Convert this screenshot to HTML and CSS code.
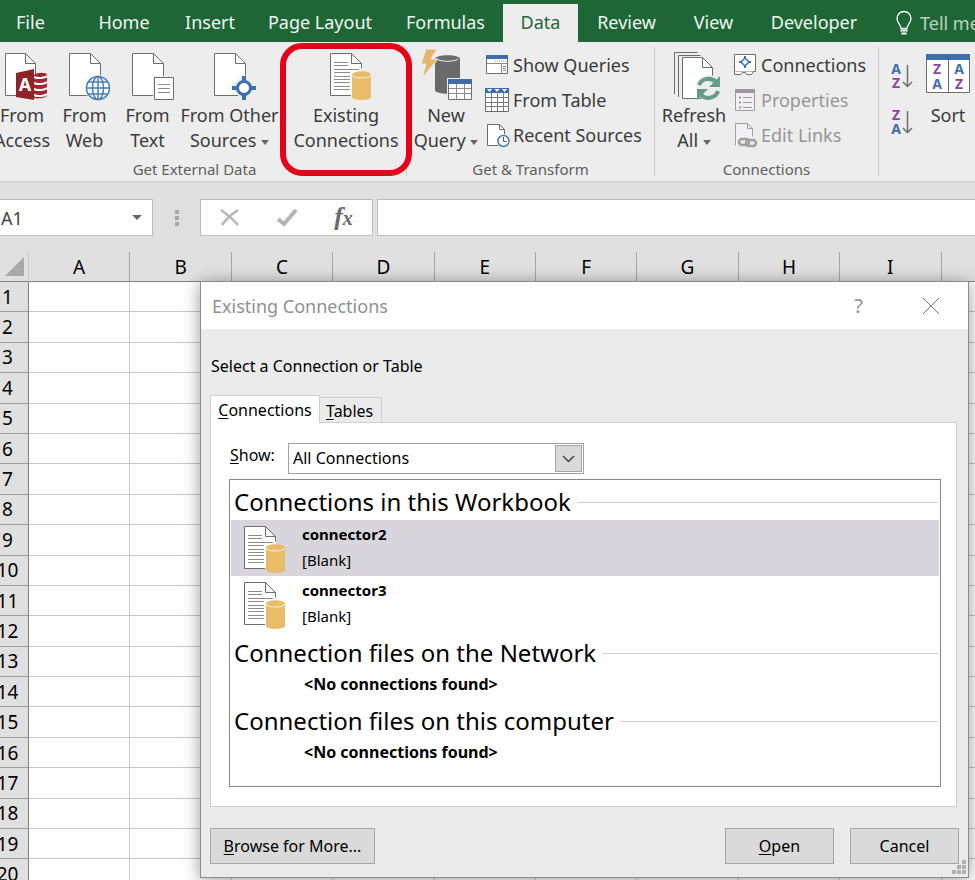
FILE: index.html
```html
<!DOCTYPE html>
<html lang="en">
<head>
    <meta charset="UTF-8">
    <meta name="viewport" content="width=device-width, initial-scale=1.0">
    <title>Existing Connections</title>
    <link rel="stylesheet" href="styles.css">
</head>
<body>

    <!-- shared icons -->
    <svg class="defs" width="0" height="0">
        <symbol id="page" viewBox="0 0 50 48">
            <path d="M9.5 1.5h21l10 10v32h-31z" fill="#fff" stroke="#6d6d6d"/>
            <path d="M30.5 1.5v10h10" fill="none" stroke="#6d6d6d"/>
        </symbol>
        <symbol id="page-db" viewBox="0 0 50 48">
            <path d="M9.5 43.5v-42h21l10 10v32z" fill="#fff"/>
            <path d="M30 43.5H9.5v-42h21l10 10v5M30.5 1.5v10h10" fill="none" stroke="#6d6d6d"/>
            <path d="M13 10.5h14M13 13.5h14M13 17.5h25M13 20.5h16M13 24.5h16M13 27.5h16M13 30.5h16M13 34.5h16M13 37.5h16" stroke="#8c8c8c"/>
            <path d="M31 23c0-5 19-5 19 0v22c0 4-19 4-19 0z" fill="#e8bd6a"/>
            <path d="M31 23c1 4 18 4 19 0" fill="none" stroke="#fbf0d8"/>
        </symbol>
    </svg>

    <nav class="tabs">
        <a href="#" class="file">File</a>
        <a href="#">Home</a>
        <a href="#">Insert</a>
        <a href="#">Page Layout</a>
        <a href="#">Formulas</a>
        <a href="#" class="active">Data</a>
        <a href="#">Review</a>
        <a href="#">View</a>
        <a href="#">Developer</a>
        <a href="#" class="tell">
            <svg width="16" height="24" viewBox="0 0 16 24" fill="none" stroke="#fff">
                <path d="M5 17.5c0-4-4-5-4-10a7 7 0 0 1 14 0c0 5-4 6-4 10z" stroke-width="1.3"/>
                <path d="M4.5 19.5h7M5.5 22.5h5" stroke-width="2"/>
            </svg>
            Tell me
        </a>
    </nav>

    <div class="ribbon">
        <section class="group external">
            <div class="items">
                <button class="big">
                    <svg width="50" height="48" viewBox="0 0 50 48">
                        <path d="M8.5 1.5h20l10 10v32h-30z" fill="#fff" stroke="#6d6d6d"/>
                        <path d="M28.5 1.5v10h10" fill="none" stroke="#6d6d6d"/>
                        <path d="M37 23c3-3 13-3 13 0v20c0 3-9 4-13 3z" fill="#a4262c"/>
                        <path d="M37 25c4 2 11 1 13-1M37 31c4 2 11 1 13-1M37 37c4 2 11 1 13-1M37 43c4 2 11 1 13-1" fill="none" stroke="#fff" stroke-width="2"/>
                        <path d="M19 21l18-4v31l-18-3z" fill="#8f2228"/>
                        <text x="28" y="39" class="glyph access">A</text>
                    </svg>
                    <span>From</span><span>Access</span>
                </button>
                <button class="big">
                    <svg width="50" height="48" viewBox="0 0 50 48">
                        <use href="#page"/>
                        <circle cx="38" cy="36" r="13" fill="#ededed"/>
                        <g fill="#fff" stroke="#4a7ebb" stroke-width="1.5">
                            <circle cx="38" cy="36" r="11.5"/>
                            <ellipse cx="38" cy="36" rx="5.5" ry="11.5"/>
                            <path d="M38 24.5v23M26.5 36h23M28.5 30h19M28.5 42h19" fill="none"/>
                        </g>
                    </svg>
                    <span>From</span><span>Web</span>
                </button>
                <button class="big">
                    <svg width="50" height="48" viewBox="0 0 50 48">
                        <use href="#page"/>
                        <path d="M30 24h22v24H30z" fill="#ededed"/>
                        <path d="M31.5 25.5h19v22h-19z" fill="#fff" stroke="#6d6d6d"/>
                        <path d="M35 32.5h12M35 36.5h12M35 40.5h12" stroke="#8c8c8c"/>
                    </svg>
                    <span>From</span><span>Text</span>
                </button>
                <button class="big">
                    <svg width="50" height="48" viewBox="0 0 50 48">
                        <use href="#page"/>
                        <path d="M39 22l14 14-14 13-14-13z" fill="#ededed"/>
                        <path d="M39 24v6M39 42v6M27 36h6M45 36h6" stroke="#3f6fb0" stroke-width="4"/>
                        <circle cx="39" cy="36" r="6.5" fill="#fff" stroke="#3f6fb0" stroke-width="3"/>
                    </svg>
                    <span>From Other</span><span>Sources <i class="caret"></i></span>
                </button>
                <button class="big highlighted">
                    <svg width="50" height="48"><use href="#page-db"/></svg>
                    <span>Existing</span><span>Connections</span>
                </button>
            </div>
            <h2>Get External Data</h2>
        </section>

        <section class="group transform">
            <div class="items">
                <button class="big">
                    <svg width="50" height="48" viewBox="0 0 50 48">
                        <path d="M14 7c0-5 25-5 25 0v31c0 5-25 5-25 0z" fill="#6a6a6a"/>
                        <path d="M16 7c3 3 18 3 21 0" fill="none" stroke="#ededed"/>
                        <path d="M5-3h11l-6 10h7L1 26l4-14H0z" fill="#e8b56a" stroke="#ededed"/>
                        <path d="M26 26h26v23H26z" fill="#ededed"/>
                        <path d="M27.5 28.5h23v19h-23z" fill="#fff" stroke="#6d6d6d"/>
                        <path d="M27 27h24v5H27z" fill="#3f6cac"/>
                        <path d="M28 36.5h22M28 41.5h22M35.5 32v15M43.5 32v15" stroke="#8c8c8c"/>
                    </svg>
                    <span>New</span><span>Query <i class="caret"></i></span>
                </button>
                <ul class="list">
                    <li><button>
                        <svg width="24" height="24" viewBox="0 0 24 24">
                            <path d="M1.5 3.5h21v17h-21z" fill="#fff" stroke="#6d6d6d"/>
                            <path d="M1 2h22v4H1z" fill="#3f6cac"/>
                            <path d="M2 10.5h20M16.5 11v9" stroke="#8c8c8c"/>
                            <path d="M10 8h11" stroke="#8c8c8c" stroke-dasharray="1 1"/>
                            <path d="M18 13.5h3M18 15.5h3M18 17.5h3" stroke="#8c8c8c"/>
                        </svg>Show Queries</button></li>
                    <li><button>
                        <svg width="24" height="26" viewBox="0 0 24 26">
                            <path d="M.5 2.5h23v22H.5z" fill="#fff" stroke="#6d6d6d"/>
                            <path d="M0 1h24v5H0z" fill="#3f6cac"/>
                            <path d="M2 2h5l-2.5 3zM9.500 2h5L12 5zM17 2h5l-2.500 3z" fill="#fff"/>
                            <path d="M0 10.5h24M0 15.5h24M0 19.5h24M6.5 6v18M12.5 6v18M18.5 6v18" stroke="#7c7c7c"/>
                        </svg>From Table</button></li>
                    <li><button>
                        <svg width="24" height="26" viewBox="0 0 24 26">
                            <path d="M2.5 23.5v-21h12l5 5v16z" fill="#fff" stroke="#6d6d6d"/>
                            <path d="M14.5 2.5v5h5" fill="none" stroke="#6d6d6d"/>
                            <circle cx="18.5" cy="19" r="7" fill="#ededed"/>
                            <circle cx="18.5" cy="19" r="5.5" fill="#fff" stroke="#4a7ebb" stroke-width="1.5"/>
                            <path d="M18.5 15v4.5h3" fill="none" stroke="#555"/>
                        </svg>Recent Sources</button></li>
                </ul>
            </div>
            <h2>Get &amp; Transform</h2>
        </section>

        <section class="group conns">
            <div class="items">
                <button class="big">
                    <svg width="50" height="48" viewBox="0 0 50 48" fill="none" stroke="#6d6d6d">
                        <path d="M5.5 42V.5h23M9.5 45V3.5h22"/>
                        <path d="M13.5 46.5v-41h20l10 10v31z" fill="#fff"/>
                        <path d="M33.5 5.5v10h10"/>
                        <circle cx="40" cy="36" r="13" fill="#ededed" stroke="none"/>
                        <path d="M30 33a10 9 0 0 1 17-3M49 39a10 9 0 0 1-17 4" stroke="#669c85" stroke-width="4"/>
                        <path d="M51 24v11H40zM28 48V37h11z" fill="#669c85" stroke="none"/>
                    </svg>
                    <span>Refresh</span><span>All <i class="caret"></i></span>
                </button>
                <ul class="list">
                    <li><button>
                        <svg width="24" height="24" viewBox="0 0 24 24">
                            <path d="M1.5 1.5h21v17h-21z" fill="#fff" stroke="#6d6d6d"/>
                            <path d="M12 3v3M12 12v3M6 9h3M15 9h3" stroke="#3f6fb0" stroke-width="2"/>
                            <path d="M12 5l4 4-4 4-4-4z" fill="#fff" stroke="#3f6fb0" stroke-width="1.5"/>
                            <path d="M1.5 18.5v3h6l2-2h3l1 2h5l2-3" fill="#fff" stroke="#6d6d6d"/>
                        </svg>Connections</button></li>
                    <li><button disabled>
                        <svg width="24" height="24" viewBox="0 0 24 24">
                            <path d="M2.5 1.5h19v21h-19z" fill="#f5eef5" stroke="#9c9c9c"/>
                            <path d="M2 1h20v4H2z" fill="#9c9c9c"/>
                            <path d="M10 9.500h9M10 14.500h9M10 19.500h9" stroke="#9c9c9c"/>
                            <path d="M6 9.500h2M6 14.500h2M6 19.500h2" stroke="#9c9c9c" stroke-width="2"/>
                        </svg>Properties</button></li>
                    <li><button disabled>
                        <svg width="24" height="26" viewBox="0 0 24 26" fill="none" stroke="#a0a0a0">
                            <path d="M2.5 23.5v-22h12l5 5v17z" fill="#f5eef5" stroke="none"/>
                            <path d="M2.5 23.5v-22h12l5 5v8M14.5 1.5v5h5"/>
                            <path d="M4 16h20v9H4z" fill="#ededed" stroke="none"/>
                            <rect x="6" y="17" width="10" height="6" rx="3" stroke-width="2.5"/>
                            <rect x="13" y="18" width="10" height="6" rx="3" stroke-width="2.5"/>
                        </svg>Edit Links</button></li>
                </ul>
            </div>
            <h2>Connections</h2>
        </section>

        <section class="group sorting">
            <div class="items">
                <div class="orders">
                    <button aria-label="Sort A to Z">
                        <svg width="24" height="26" viewBox="0 0 24 26">
                            <text x="6" y="11" class="glyph blue">A</text>
                            <text x="6" y="25" class="glyph purple">Z</text>
                            <path d="M17.5 2v21M13 19l4.5 4.5L22 19" fill="none" stroke="#6d6d6d" stroke-width="1.5"/>
                        </svg>
                    </button>
                    <button aria-label="Sort Z to A">
                        <svg width="24" height="26" viewBox="0 0 24 26">
                            <text x="6" y="11" class="glyph purple">Z</text>
                            <text x="6" y="25" class="glyph blue">A</text>
                            <path d="M17.5 2v21M13 19l4.5 4.5L22 19" fill="none" stroke="#6d6d6d" stroke-width="1.5"/>
                        </svg>
                    </button>
                </div>
                <button class="big">
                    <svg width="50" height="48" viewBox="0 0 50 48">
                        <path d="M3.5 3.5h43v37h-43z" fill="#fff" stroke="#6d6d6d"/>
                        <path d="M3 2h44v6H3z" fill="#3f6cac"/>
                        <path d="M25.5 8v32" stroke="#6d6d6d"/>
                        <text x="14" y="22" class="glyph purple">Z</text>
                        <text x="14" y="37" class="glyph blue">A</text>
                        <text x="36" y="22" class="glyph blue">A</text>
                        <text x="36" y="37" class="glyph purple">Z</text>
                    </svg>
                    <span>Sort</span>
                </button>
            </div>
        </section>
    </div>

    <div class="formula-bar">
        <div class="name-box">
            <input type="text" value="A1" aria-label="Name box">
            <i class="caret"></i>
        </div>
        <div class="dots"><i></i><i></i><i></i></div>
        <div class="entry">
            <button aria-label="Cancel entry">
                <svg width="20" height="20" viewBox="0 0 20 20" fill="none" stroke="#b5b5b5" stroke-width="2.5"><path d="M1 2c6 4 11 8 17 15M18 2C12 6 6 11 2 17"/></svg>
            </button>
            <button aria-label="Enter">
                <svg width="22" height="20" viewBox="0 0 22 20" fill="none" stroke="#b5b5b5" stroke-width="4"><path d="M2 11l6 5L20 2"/></svg>
            </button>
            <button class="fx">f<small>x</small></button>
        </div>
        <input type="text" class="formula" aria-label="Formula">
    </div>

    <main class="sheet">
        <table>
            <thead>
                <tr id="columns">
                    <td class="corner"><svg width="19" height="19" viewBox="0 0 19 19"><path d="M19 0v19H0z" fill="#a9a9a9"/></svg></td>
                </tr>
            </thead>
            <tbody id="rows"></tbody>
        </table>

        <div class="dialog" role="dialog" aria-labelledby="dialogTitle">
            <header>
                <h1 id="dialogTitle">Existing Connections</h1>
                <button>?</button>
                <button aria-label="Close">
                    <svg width="16" height="16" viewBox="0 0 16 16" stroke="#777"><path d="M0 0l16 16M16 0L0 16"/></svg>
                </button>
            </header>

            <p>Select a Connection or Table</p>

            <div class="dialog-tabs">
                <button class="current"><u>C</u>onnections</button>
                <button><u>T</u>ables</button>
            </div>
            <div class="panel">
                <div class="show">
                    <label for="show"><u>S</u>how:</label>
                    <div class="select">
                        <select id="show">
                            <option>All Connections</option>
                        </select>
                        <span class="arrow">
                            <svg width="13" height="8" viewBox="0 0 13 8" fill="none" stroke="#444" stroke-width="1.5"><path d="M1 1l5.5 5.5L12 1"/></svg>
                        </span>
                    </div>
                </div>

                <div class="listbox">
                    <h3>Connections in this Workbook</h3>
                    <div class="connection selected">
                        <svg width="50" height="48"><use href="#page-db"/></svg>
                        <div><b>connector2</b><span>[Blank]</span></div>
                    </div>
                    <div class="connection">
                        <svg width="50" height="48"><use href="#page-db"/></svg>
                        <div><b>connector3</b><span>[Blank]</span></div>
                    </div>
                    <h3>Connection files on the Network</h3>
                    <p class="empty">&lt;No connections found&gt;</p>
                    <h3>Connection files on this computer</h3>
                    <p class="empty">&lt;No connections found&gt;</p>
                </div>
            </div>

            <footer>
                <button class="browse"><u>B</u>rowse for More...</button>
                <button><u>O</u>pen</button>
                <button>Cancel</button>
            </footer>
            <svg class="grip" width="14" height="14" viewBox="0 0 14 14" fill="#b0b0b0"><path d="M10 0h4v4h-4zM5 5h4v4H5zM10 5h4v4h-4zM0 10h4v4H0zM5 10h4v4H5zM10 10h4v4h-4z"/></svg>
        </div>
    </main>

    <script>
        const columns = 'ABCDEFGHIJ'.split('');

        columns.forEach(function (name) {
            const th = document.createElement('th');
            th.textContent = name === 'J' ? '' : name;
            document.getElementById('columns').appendChild(th);
        });

        for (let i = 1; i <= 20; i++) {
            const row = document.getElementById('rows').insertRow();
            row.innerHTML = '<th>' + i + '</th>' + '<td></td>'.repeat(columns.length);
        }
    </script>

</body>
</html>
```
FILE: styles.css
```css
* {
    box-sizing: border-box;
}
body {
    font-family: "Noto Sans", "Open Sans", sans-serif;
    font-size: 18px;
    display: flex;
    flex-direction: column;
    height: 100vh;
    margin: 0;
    overflow: hidden;
    background-color: #e0e0e0;
    color: #000;
}
button, input, select {
    font: inherit;
    color: inherit;
    margin: 0;
    padding: 0;
    border: none;
    background: none;
}
h1, h2, h3, p, ul {
    margin: 0;
    padding: 0;
    font-weight: normal;
    list-style: none;
}
svg {
    display: block;
    flex: none;
    overflow: visible;
}
.defs {
    position: absolute;
}
u {
    text-underline-offset: 2px;
}
.caret {
    display: inline-block;
    border: 4px solid transparent;
    border-top: 5px solid #666;
    border-bottom: none;
    vertical-align: middle;
}

/* tabs */
.tabs {
    display: grid;
    grid-template-columns: 80px 88px 84px 136px 115px 75px 97px 77px 124px auto;
    height: 42px;
    flex: none;
    padding-top: 4px;
    background-color: #1f6637;
}
.tabs a {
    line-height: 36px;
    text-align: center;
    text-decoration: none;
    white-space: nowrap;
    color: #f0f5f1;
}
.tabs .file {
    padding-left: 16px;
    text-align: left;
}
.tabs .active {
    background-color: #ededed;
    color: #1f6637;
}
.tabs .tell {
    display: flex;
    align-items: center;
    gap: 8px;
    padding-left: 20px;
    color: #b9d3c1;
}

/* ribbon */
.ribbon {
    display: flex;
    flex: none;
    height: 141px;
    padding: 5px 0;
    background-color: #ededed;
    border-bottom: 2px solid #d2d2d2;
    color: #3b3b3b;
}
.group {
    flex: none;
    border-right: 1px solid #cacaca;
}
.group:last-child {
    border: none;
}
.group h2 {
    font-size: 15px;
    line-height: 30px;
    text-align: center;
    color: #5f5f5f;
}
.items {
    display: grid;
    height: 107px;
}
.external {
    width: 416px;
    margin-left: -9px;
}
.external .items {
    grid-template-columns: 62px 63px 63px 101px 132px;
}
.external h2 {
    padding-right: 8px;
}
.transform {
    width: 248px;
}
.conns {
    width: 224px;
}
.transform .items, .conns .items {
    grid-template-columns: 78px auto;
}
.sorting .items {
    grid-template-columns: 44px 50px;
}
.big {
    display: flex;
    flex-direction: column;
    align-items: center;
    padding-top: 5px;
    line-height: 25px;
    white-space: nowrap;
}
.big svg {
    margin-bottom: 3px;
}
.highlighted {
    position: relative;
}
.highlighted::after {
    content: "";
    position: absolute;
    inset: -4px 0 -22px;
    border: 6px solid #e6001a;
    border-radius: 22px;
}
.list button {
    display: flex;
    align-items: center;
    gap: 4px;
    height: 35px;
    line-height: 24px;
    white-space: nowrap;
}
.list button:disabled {
    color: #969696;
}
.orders {
    display: flex;
    flex-direction: column;
    gap: 20px;
    padding: 16px 0 0 11px;
}
.glyph {
    font-size: 14px;
    font-weight: bold;
    text-anchor: middle;
}
.blue {
    fill: #3f6fb0;
}
.purple {
    fill: #8549a5;
}
.access {
    font-size: 18px;
    fill: #fff;
}

/* formula bar */
.formula-bar {
    display: flex;
    flex: none;
    height: 69px;
    padding: 16px 0;
}
.name-box, .entry, .formula {
    height: 37px;
    border: 1px solid #bdbdbd;
    background-color: #fdfdfd;
}
.name-box {
    display: flex;
    align-items: center;
    width: 153px;
    padding-right: 10px;
    border-left: none;
    color: #444;
}
.name-box input {
    flex: 1;
    min-width: 0;
    padding-left: 1px;
}
.name-box .caret {
    border-width: 5px;
    border-bottom: none;
}
.dots {
    display: flex;
    flex-direction: column;
    align-items: center;
    justify-content: center;
    gap: 2px;
    width: 47px;
}
.dots i {
    width: 4px;
    height: 4px;
    background-color: #a6a6a6;
}
.entry {
    display: grid;
    grid-template-columns: repeat(3, 57px);
    place-items: center;
    width: 173px;
    margin-right: 4px;
}
.fx {
    font-family: "Liberation Serif", serif;
    font-size: 26px;
    font-style: italic;
    font-weight: bold;
    line-height: 26px;
    color: #6a6a6a;
}
.fx small {
    font-size: 20px;
}
.formula {
    flex: 1;
    min-width: 0;
    border-right: none;
}

/* sheet */
.sheet {
    position: relative;
    flex: 1;
    min-height: 0;
    overflow: hidden;
}
.sheet table {
    width: 1056px;
    height: 638px;
    margin-left: -13px;
    border-spacing: 0;
    table-layout: fixed;
    background-color: #fff;
    font-size: 19px;
    line-height: 24px;
}
.sheet th {
    padding: 0;
    font-weight: normal;
    background-color: #e0e0e0;
    border-right: 1px solid #a6a6a6;
    border-bottom: 1px solid #808080;
}
.sheet td {
    padding: 0;
    border-right: 1px solid #cacaca;
    border-bottom: 1px solid #c6c6c6;
}
.sheet thead tr {
    height: 30px;
}
.sheet tbody th {
    border-right-color: #808080;
    border-bottom-color: #9a9a9a;
}
.sheet .corner {
    width: 42px;
    padding-left: 18px;
    background-color: #e0e0e0;
    border-bottom-color: #808080;
}

/* dialog */
.dialog {
    position: absolute;
    top: 29px;
    left: 200px;
    right: 6px;
    border: 1px solid #8c8c8c;
    background-color: #ebebeb;
    box-shadow: 0 2px 16px rgba(0, 0, 0, 0.4);
    font-size: 16px;
}
.dialog header {
    display: flex;
    align-items: center;
    height: 47px;
    padding: 0 29px 0 11px;
    background-color: #fff;
    color: #8f8f8f;
}
.dialog header button {
    font-size: 20px;
}
.dialog header button + button {
    margin-left: 60px;
}
.dialog h1 {
    flex: 1;
    font-size: 18px;
    line-height: 24px;
}
.dialog > p {
    padding: 25px 10px 17px;
    line-height: 24px;
}
.dialog-tabs {
    display: flex;
    align-items: flex-end;
    margin-left: 9px;
}
.dialog-tabs button {
    height: 25px;
    padding: 1px 8px 0 6px;
    border: 1px solid #cfcfcf;
    border-width: 1px 1px 0 0;
    line-height: 24px;
}
.dialog-tabs .current {
    width: 110px;
    height: 28px;
    margin-bottom: -1px;
    padding: 0;
    border-left-width: 1px;
    background-color: #fff;
    z-index: 1;
}
.panel {
    margin: 0 11px 0 9px;
    padding: 20px 15px 19px 18px;
    border: 1px solid #cfcfcf;
    background-color: #fff;
}
.show {
    display: flex;
    margin-bottom: 5px;
}
.show label {
    width: 59px;
    padding-left: 1px;
    line-height: 24px;
}
.select {
    position: relative;
    width: 296px;
}
.select select {
    width: 100%;
    height: 31px;
    padding: 0 0 2px 4px;
    border: 1px solid #a0a0a8;
    border-radius: 0;
    background-color: #fff;
    appearance: none;
}
.arrow {
    position: absolute;
    top: 2px;
    right: 2px;
    display: flex;
    align-items: center;
    justify-content: center;
    width: 27px;
    height: 27px;
    border: 1px solid #a6a6a6;
    background-color: #d9d9d9;
    pointer-events: none;
}
.listbox {
    height: 308px;
    padding: 4px 1px;
    border: 1px solid #828790;
}
.listbox h3 {
    display: flex;
    align-items: center;
    gap: 6px;
    padding: 0 1px 0 3px;
    font-size: 24px;
    line-height: 36px;
}
.listbox h3::after {
    content: "";
    flex: 1;
    height: 1px;
    background-color: #d0d0d0;
}
.connection {
    display: flex;
    gap: 17px;
    height: 56px;
    padding: 5px 0 0 4px;
}
.connection + h3 {
    margin-top: 3px;
}
.connection div {
    display: flex;
    flex-direction: column;
    font-size: 15px;
    line-height: 26px;
    margin-top: -4px;
}
.selected {
    background-color: #d8d6dc;
}
.empty {
    padding-left: 73px;
    font-size: 16px;
    font-weight: bold;
    line-height: 26px;
    margin-bottom: 6px;
}
.dialog footer {
    display: flex;
    gap: 16px;
    padding: 21px 9px 13px;
}
.dialog footer button {
    width: 109px;
    height: 36px;
    border: 1px solid #a6a6a6;
    background-color: #dadada;
}
.dialog footer .browse {
    width: 165px;
    margin-right: auto;
}
.grip {
    position: absolute;
    right: 2px;
    bottom: 3px;
}
```
